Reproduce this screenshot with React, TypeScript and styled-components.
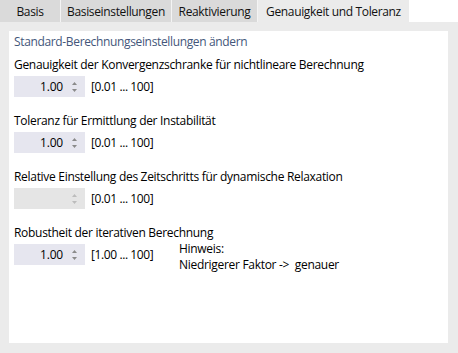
import styled, { createGlobalStyle } from "styled-components";

const GlobalStyle = createGlobalStyle`
  html, body {
    margin: 0;
    padding: 0;
    background: #ffffff;
  }
  body {
    font-family: "Open Sans", "Noto Sans", Arial, sans-serif;
    font-size: 12px;
    color: #000;
  }
`;

interface Field {
  label: string;
  value: string;
  range: string;
  disabled?: boolean;
  hint?: string[];
}

const tabs = [
  { title: "Basis", width: 61 },
  { title: "Basiseinstellungen", width: 111 },
  { title: "Reaktivierung", width: 86 },
  { title: "Genauigkeit und Toleranz", width: 151, active: true },
];

const fields: Field[] = [
  {
    label: "Genauigkeit der Konvergenzschranke für nichtlineare Berechnung",
    value: "1.00",
    range: "[0.01 ... 100]",
  },
  {
    label: "Toleranz für Ermittlung der Instabilität",
    value: "1.00",
    range: "[0.01 ... 100]",
  },
  {
    label: "Relative Einstellung des Zeitschritts für dynamische Relaxation",
    value: "",
    range: "[0.01 ... 100]",
    disabled: true,
  },
  {
    label: "Robustheit der iterativen Berechnung",
    value: "1.00",
    range: "[1.00 ... 100]",
    hint: ["Hinweis:", "Niedrigerer Faktor ->  genauer"],
  },
];

// tiny up/down triangles of the numeric spin box
const SpinArrows = ({ disabled }: { disabled?: boolean }) => (
  <svg width="7" height="14" viewBox="0 0 7 14">
    <path d="M3.5 2 L6 5 L1 5 Z" fill={disabled ? "#bcbcbc" : "#8a8a8a"} />
    <path d="M3.5 12 L6 9 L1 9 Z" fill={disabled ? "#bcbcbc" : "#8a8a8a"} />
  </svg>
);

export default function App() {
  return (
    <>
      <GlobalStyle />
      <Window>
        <TabBar>
          {tabs.map((t) => (
            <Tab key={t.title} $width={t.width} $active={!!t.active}>
              {t.title}
            </Tab>
          ))}
        </TabBar>
        <Body>
          <Panel>
            <Heading>Standard-Berechnungseinstellungen ändern</Heading>
            {fields.map((f) => (
              <Group key={f.label}>
                <Label>{f.label}</Label>
                <Row>
                  <Spinner $disabled={!!f.disabled}>
                    <Value>{f.value}</Value>
                    <Arrows>
                      <SpinArrows disabled={f.disabled} />
                    </Arrows>
                  </Spinner>
                  <Range>{f.range}</Range>
                  {f.hint && (
                    <Hint>
                      {f.hint.map((h) => (
                        <div key={h}>{h}</div>
                      ))}
                    </Hint>
                  )}
                </Row>
              </Group>
            ))}
          </Panel>
        </Body>
      </Window>
    </>
  );
}

const Window = styled.div`
  width: 458px;
  height: 353px;
  display: flex;
  flex-direction: column;
  overflow: hidden;
`;

const TabBar = styled.div`
  display: flex;
  height: 22px;
  background: #ffffff;
  flex-shrink: 0;
`;

const Tab = styled.div<{ $width: number; $active: boolean }>`
  width: ${({ $width }) => $width}px;
  box-sizing: border-box;
  display: flex;
  align-items: center;
  justify-content: center;
  white-space: nowrap;
  font-size: 12px;
  letter-spacing: -0.35px;
  color: #111;
  background: ${({ $active }) => ($active ? "#ebebeb" : "#dadada")};
  border-right: ${({ $active }) => ($active ? "none" : "1px solid #f4f4f4")};
`;

const Body = styled.div`
  flex: 1;
  background: #ebebeb;
  padding: 9px 10px 10px 9px;
  display: flex;
`;

const Panel = styled.div`
  flex: 1;
  background: #ffffff;
  padding: 3px 6px 0 5px;
  display: flex;
  flex-direction: column;
`;

const Heading = styled.div`
  color: #43567a;
  font-size: 12px;
  letter-spacing: -0.35px;
  line-height: 16px;
  margin-bottom: 7px;
`;

const Group = styled.div`
  display: flex;
  flex-direction: column;
  margin-bottom: 16px;
`;

const Label = styled.div`
  font-size: 12px;
  letter-spacing: -0.3px;
  line-height: 16px;
  margin-bottom: 3px;
  white-space: nowrap;
`;

const Row = styled.div`
  display: flex;
  align-items: center;
  height: 21px;
`;

const Spinner = styled.div<{ $disabled: boolean }>`
  width: 71px;
  height: 21px;
  box-sizing: border-box;
  background: ${({ $disabled }) => ($disabled ? "#e5e5e5" : "#e6e6ef")};
  display: grid;
  grid-template-columns: 49px 22px;
  align-items: center;
`;

const Value = styled.span`
  text-align: right;
  font-size: 12px;
  letter-spacing: -0.2px;
`;

const Arrows = styled.span`
  display: flex;
  justify-content: center;
  align-items: center;
  height: 21px;
`;

const Range = styled.span`
  margin-left: 6px;
  font-size: 12px;
  letter-spacing: -0.4px;
  width: 82px;
`;

const Hint = styled.div`
  align-self: flex-start;
  margin-left: 6px;
  margin-top: -3px;
  font-size: 12px;
  letter-spacing: -0.3px;
  line-height: 16px;
  white-space: pre;
`;
